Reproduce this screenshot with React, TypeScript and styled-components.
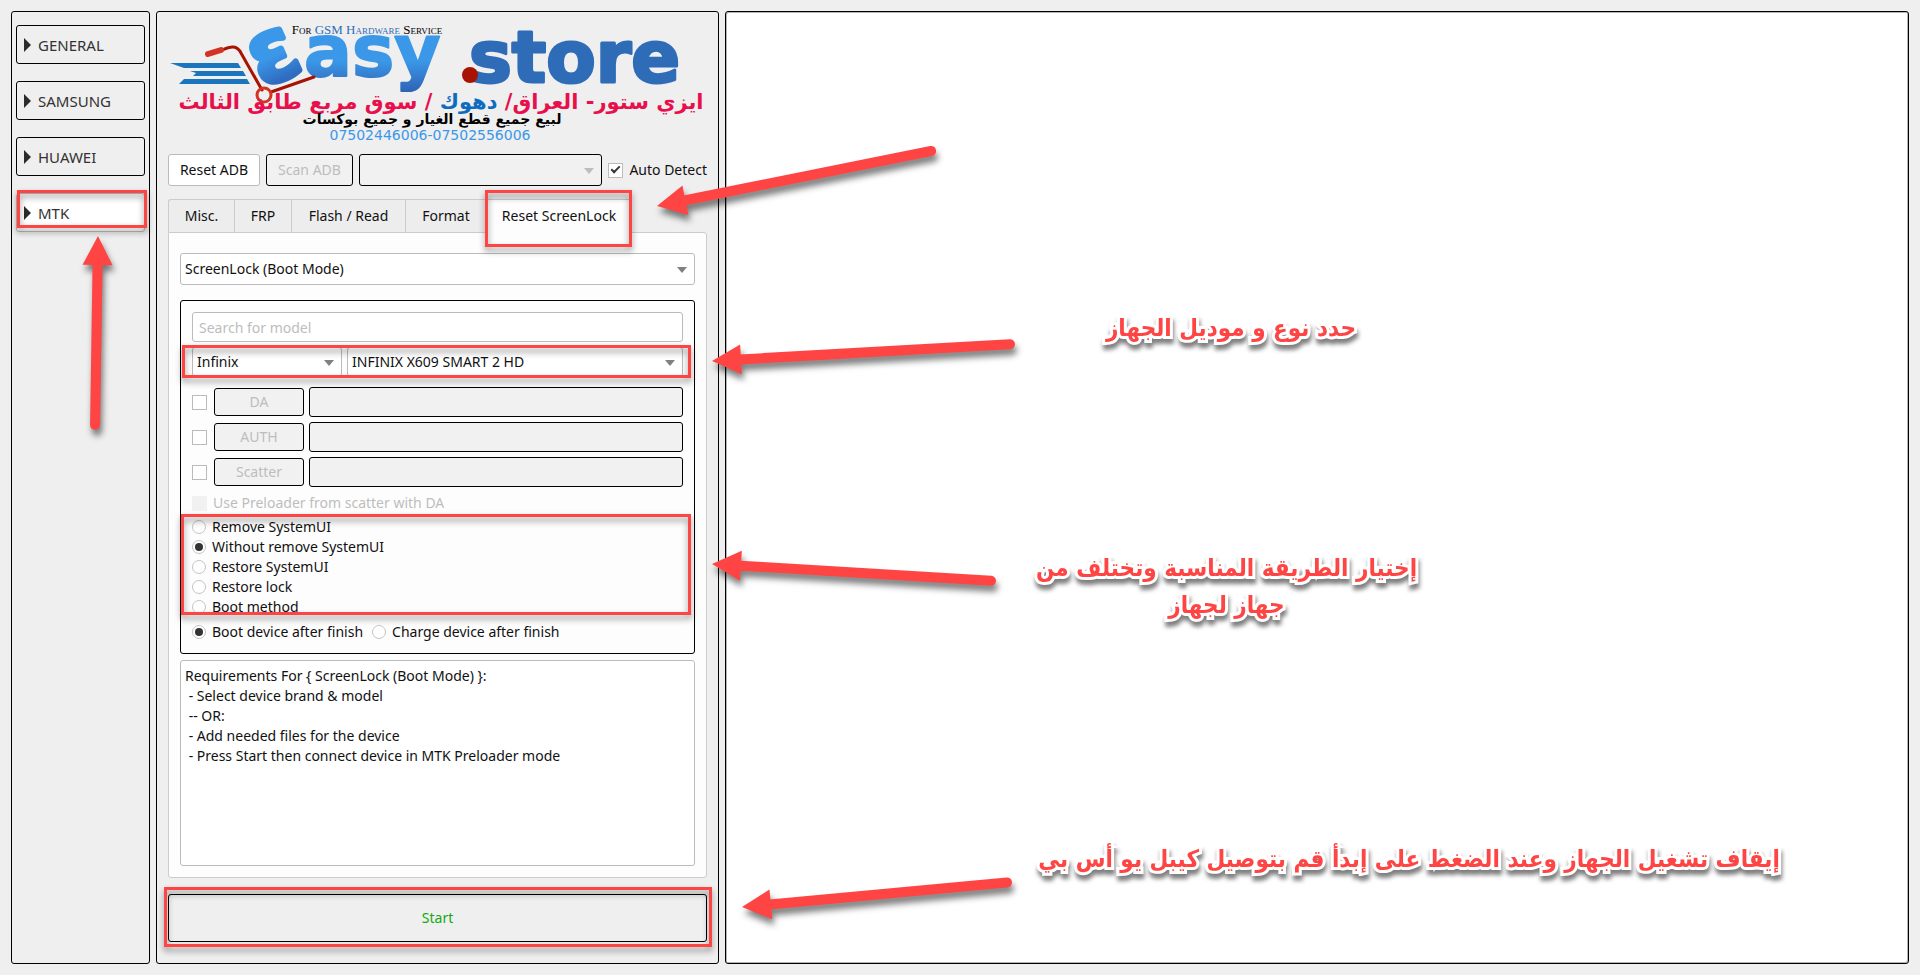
import React from "react";
import styled, { createGlobalStyle } from "styled-components";

const accent = "#ff4444";
const uiFont = '"Noto Sans", "Open Sans", sans-serif';
const arabicFont = '"DejaVu Sans Condensed", "DejaVu Sans", sans-serif';

const GlobalStyle = createGlobalStyle`
  *, *::before, *::after { box-sizing: border-box; }
  body { margin: 0; background: #efefef; color: #111; font: 14px/20px ${uiFont}; }
  button, input, select, textarea { font: inherit; color: inherit; margin: 0; }
`;

const Page = styled.div`
  position: relative;
  display: grid;
  grid-template-columns: 139px 563px minmax(0, 1fr);
  column-gap: 6px;
  min-height: 100vh;
  padding: 11px;
  overflow: hidden;
`;

const Panel = styled.section`
  display: flex;
  flex-direction: column;
  border: 1px solid #000;
  border-radius: 3px;
`;

const Sidebar = styled(Panel).attrs({ as: "nav" })`
  gap: 17px;
  padding: 13px 4px;
`;

const Workspace = styled(Panel).attrs({ as: "main" })`
  padding: 0 11px 21px;
`;

const LogPanel = styled(Panel)`
  position: relative;
  background: #fff;
  box-shadow: inset -1px -1px #b5b5b5, inset 1px 1px #b5b5b5;
`;

const NavButton = styled.button<{ $active?: boolean }>`
  position: relative;
  display: flex;
  align-items: center;
  gap: 7px;
  height: 39px;
  padding: 0 7px;
  border: 1px solid ${(p) => (p.$active ? "#bbb" : "#000")};
  border-radius: 3px;
  background: ${(p) => (p.$active ? "#fff" : "#efefef")};
  color: #333;
  font-size: 15px;
`;

const Highlight = styled.span<{ $inset: string }>`
  position: absolute;
  inset: ${(p) => p.$inset};
  border: 3px solid ${accent};
  filter: drop-shadow(0 4px 3px rgba(0, 0, 0, 0.45));
  pointer-events: none;
`;

const LogoArea = styled.header`
  height: 142px;
`;

const Logo = styled.svg`
  display: block;
  width: 539px;
  height: 142px;
  overflow: visible;
`;

const AdbRow = styled.div`
  display: flex;
  align-items: center;
  gap: 6px;
  height: 32px;
  margin-bottom: 13px;
`;

const Button = styled.button<{ $width: number }>`
  width: ${(p) => p.$width}px;
  height: 100%;
  padding: 0;
  border: 1px solid #bbb;
  border-radius: 3px;
  background: #fff;
  white-space: nowrap;
  &:disabled { border-color: #000; background: #f1f1f1; color: #bdbdbd; }
`;

const SelectWrap = styled.div<{ $width?: number }>`
  position: relative;
  display: flex;
  flex: ${(p) => (p.$width ? `0 0 ${p.$width}px` : "1 1 0")};
  min-width: 0;
  color: #808080;
  &:has(select:disabled) { color: #bdbdbd; }
`;

const Select = styled.select<{ $height?: number }>`
  appearance: none;
  width: 100%;
  height: ${(p) => p.$height ?? 32}px;
  padding: 0 24px 0 4px;
  border: 1px solid #bbb;
  border-radius: 3px;
  background: #fff;
  color: #111;
  &:disabled { border-color: #000; background: #f1f1f1; opacity: 1; }
`;

const Caret = styled.svg`
  position: absolute;
  top: calc(50% - 2px);
  right: 8px;
  width: 10px;
  height: 6px;
  fill: currentColor;
  pointer-events: none;
`;

const Choice = styled.label<{ $muted?: boolean }>`
  display: flex;
  align-items: center;
  gap: 6px;
  height: 20px;
  white-space: nowrap;
  color: ${(p) => (p.$muted ? "#bdbdbd" : "inherit")};
`;

const Check = styled.input.attrs({ type: "checkbox" })`
  appearance: none;
  flex: none;
  display: grid;
  place-items: center;
  width: 15px;
  height: 15px;
  border: 1px solid #bbb;
  background: #fff;
  &:checked::before {
    content: "";
    width: 9px;
    height: 5px;
    margin-bottom: 3px;
    border: solid #333;
    border-width: 0 0 2px 2px;
    transform: rotate(-45deg);
  }
  &:disabled { border-color: #f1f1f1; background: #f1f1f1; }
`;

const Radio = styled.input.attrs({ type: "radio" })`
  appearance: none;
  flex: none;
  display: grid;
  place-items: center;
  width: 14px;
  height: 14px;
  border: 1px solid #c4c4c4;
  border-radius: 50%;
  background: #fff;
  &:checked::before {
    content: "";
    width: 8px;
    height: 8px;
    border-radius: 50%;
    background: #333;
  }
`;

const TabList = styled.div`
  display: flex;
  height: 33px;
`;

const Tab = styled.button<{ $width: number }>`
  position: relative;
  width: ${(p) => p.$width}px;
  padding: 0;
  border: 1px solid #ccc;
  border-width: 1px 0 0 1px;
  background: #ededed;
  white-space: nowrap;
  &:first-child { border-top-left-radius: 3px; }
  &[aria-selected="true"] {
    z-index: 1;
    margin-bottom: -1px;
    padding-bottom: 1px;
    border-right-width: 1px;
    background: #fdfdfd;
  }
`;

const TabPane = styled.div`
  display: flex;
  flex: 1;
  flex-direction: column;
  margin-bottom: 16px;
  padding: 20px 11px 11px;
  border: 1px solid #ccc;
  border-radius: 0 3px 3px 3px;
  background: #fdfdfd;
`;

const Line = styled.div<{ $gap?: number }>`
  position: relative;
  display: flex;
  align-items: center;
  gap: ${(p) => p.$gap ?? 5}px;
`;

const ModelLine = styled(Line)`
  margin-top: 5px;
`;

const Group = styled.div`
  display: flex;
  flex-direction: column;
  margin: 15px 0 6px;
  padding: 11px;
  border: 1px solid #000;
  border-radius: 3px;
`;

const TextField = styled.input`
  flex: 1;
  min-width: 0;
  height: 30px;
  padding: 0 6px;
  border: 1px solid #bbb;
  border-radius: 3px;
  background: #fff;
  &::placeholder { color: #bdbdbd; }
  &:disabled { border-color: #000; background: #f1f1f1; }
`;

const FileRows = styled.div`
  display: grid;
  gap: 5px;
  margin: 10px 0 6px;
`;

const FileRow = styled.div`
  display: flex;
  align-items: center;
  gap: 5px;
  ${Check} { margin-right: 2px; }
  ${Button} { height: 28px; }
`;

const Methods = styled.div`
  position: relative;
  margin: 4px 0 9px;
`;

const MethodList = styled.div`
  height: 96px;
  overflow: hidden;
`;

const Notes = styled.textarea`
  flex: 1;
  min-height: 110px;
  padding: 5px 4px;
  border: 1px solid #bbb;
  border-radius: 3px;
  background: #fff;
  resize: none;
  outline: none;
`;

const StartBox = styled.div`
  position: relative;
  display: flex;
`;

const StartButton = styled.button`
  flex: 1;
  height: 48px;
  border: 1px solid #000;
  border-radius: 3px;
  background: #efefef;
  color: #12a812;
`;

const ArrowLayer = styled.svg`
  position: absolute;
  top: 0;
  left: 0;
  width: 1100px;
  height: 960px;
  fill: ${accent};
  stroke: ${accent};
  filter: drop-shadow(2px 6px 3px rgba(0, 0, 0, 0.5));
  pointer-events: none;
`;

const Callout = styled.p<{ $x: number; $y: number; $width: number }>`
  position: absolute;
  left: ${(p) => p.$x}px;
  top: ${(p) => p.$y}px;
  width: ${(p) => p.$width}px;
  margin: 0;
  color: ${accent};
  font: bold 24px/37px ${arabicFont};
  text-align: center;
  white-space: pre;
  -webkit-text-stroke: 6px #fff;
  paint-order: stroke fill;
  filter: drop-shadow(1px 5px 2px rgba(0, 0, 0, 0.5));
`;

function Dropdown(props: { label: string; options: string[]; width?: number; height?: number; disabled?: boolean }) {
  return (
    <SelectWrap $width={props.width}>
      <Select aria-label={props.label} $height={props.height} disabled={props.disabled}>
        {props.options.map((o) => <option key={o}>{o}</option>)}
      </Select>
      <Caret viewBox="0 0 10 6"><path d="M0 0H10L5 6Z" /></Caret>
    </SelectWrap>
  );
}

function Arrow({ tip, tail }: { tip: [number, number]; tail: [number, number] }) {
  const dx = tail[0] - tip[0];
  const dy = tail[1] - tip[1];
  const length = Math.hypot(dx, dy);
  const angle = (Math.atan2(dy, dx) * 180) / Math.PI;
  return (
    <g transform={`translate(${tip[0]} ${tip[1]}) rotate(${angle})`}>
      <path d="M0 0L29 -15V15Z" stroke="none" />
      <path d={`M28 0H${length - 5}`} strokeWidth="10" strokeLinecap="round" />
    </g>
  );
}

function StoreLogo() {
  return (
    <Logo viewBox="168 12 539 142" role="img" aria-label="Easy .store">
      <defs>
        <linearGradient id="sky" gradientUnits="userSpaceOnUse" x1="0" y1="30" x2="0" y2="92">
          <stop offset="0.5" stopColor="#3b97e8" />
          <stop offset="1" stopColor="#2f62b4" />
        </linearGradient>
        <linearGradient id="skyTilt" gradientUnits="userSpaceOnUse" x1="0" y1="-50" x2="0" y2="0">
          <stop offset="0.5" stopColor="#3b97e8" />
          <stop offset="1" stopColor="#2f6cc0" />
        </linearGradient>
      </defs>
      <g fill="#1b75bc">
        <path d="M170 63H238L241 68H184Z" />
        <path d="M190 71H243L246 76H193L196 73Z" />
        <path d="M184 79H247L250 84H179Z" />
      </g>
      <g fontFamily='"DejaVu Sans", sans-serif' fontWeight="700" strokeWidth="2" strokeLinejoin="round">
        <text transform="translate(263 88) rotate(-24)" fontSize="66" fill="url(#skyTilt)" stroke="url(#skyTilt)" strokeWidth="6">Ɛ</text>
        <text x="304" y="76" fontSize="71" fill="url(#sky)" stroke="url(#sky)">asy</text>
        <text x="469" y="82" fontSize="72" fill="#2f6cb8" stroke="#2f6cb8" strokeWidth="3">store</text>
        <circle cx="470" cy="75" r="8" fill="#a81200" />
      </g>
      <g fill="none" strokeLinecap="round">
        <path d="M222 50C231 46 237 45 241 53L262 90M271 92L314 77" stroke="#a81200" strokeWidth="3" />
        <path d="M208 54L221 50" stroke="#d13424" strokeWidth="6" />
        <circle cx="264" cy="95" r="7" stroke="#d13424" strokeWidth="3" />
      </g>
      <text x="367" y="34" textAnchor="middle" fontFamily='"Liberation Serif", serif' fontSize="13" fontVariant="small-caps">
        For <tspan fill="#2f6cb8">GSM Hardware</tspan> Service
      </text>
      <g fontFamily='"DejaVu Sans", sans-serif' fontWeight="700" textAnchor="middle" direction="rtl">
        <text x="441" y="109" fontSize="21" fill="#e8104c">
          ايزي ستور- العراق/ <tspan fill="#0e6cc0">دهوك</tspan> / سوق مربع طابق الثالث
        </text>
        <text x="432" y="124" fontSize="14">لبيع جميع قطع الغيار و جميع بوكسات</text>
      </g>
      <text x="430" y="140" textAnchor="middle" fontFamily='"DejaVu Sans", sans-serif' fontSize="14" fill="#3b97e8">07502446006-07502556006</text>
    </Logo>
  );
}

const brands = ["GENERAL", "SAMSUNG", "HUAWEI", "MTK"];
const tabs: [string, number][] = [["Misc.", 66], ["FRP", 57], ["Flash / Read", 114], ["Format", 81], ["Reset ScreenLock", 146]];
const methods = ["Remove SystemUI", "Without remove SystemUI", "Restore SystemUI", "Restore lock", "Boot method"];
const notes = `Requirements For { ScreenLock (Boot Mode) }:
 - Select device brand & model
 -- OR:
 - Add needed files for the device
 - Press Start then connect device in MTK Preloader mode`;

export default function App() {
  return (
    <Page>
      <GlobalStyle />
      <Sidebar aria-label="Brands">
        {brands.map((name) => (
          <NavButton key={name} $active={name === "MTK"}>
            <svg width="7" height="14" viewBox="0 0 7 14"><path d="M0 0L7 7L0 14Z" fill="#2b2b2b" /></svg>
            {name}
            {name === "MTK" && <Highlight $inset="-4px -3px 3px 0" />}
          </NavButton>
        ))}
      </Sidebar>

      <Workspace>
        <LogoArea><StoreLogo /></LogoArea>
        <AdbRow>
          <Button $width={92}>Reset ADB</Button>
          <Button $width={87} disabled>Scan ADB</Button>
          <Dropdown label="ADB device" options={[""]} disabled />
          <Choice><Check defaultChecked />Auto Detect</Choice>
        </AdbRow>

        <TabList role="tablist">
          {tabs.map(([name, width]) => (
            <Tab key={name} role="tab" $width={width} aria-selected={name === "Reset ScreenLock"}>
              {name}
              {name === "Reset ScreenLock" && <Highlight $inset="-10px -1px -14px -2px" />}
            </Tab>
          ))}
        </TabList>
        <TabPane role="tabpanel">
          <Line><Dropdown label="Operation" options={["ScreenLock (Boot Mode)"]} /></Line>
          <Group>
            <Line><TextField aria-label="Search for model" placeholder="Search for model" /></Line>
            <ModelLine>
              <Dropdown label="Brand" options={["Infinix"]} width={150} height={30} />
              <Dropdown label="Model" options={["INFINIX X609 SMART 2 HD"]} height={30} />
              <Highlight $inset="-2px -8px -1px -10px" />
            </ModelLine>
            <FileRows>
              {["DA", "AUTH", "Scatter"].map((name) => (
                <FileRow key={name}>
                  <Check aria-label={`Use ${name}`} />
                  <Button $width={90} disabled>{name}</Button>
                  <TextField aria-label={`${name} file`} disabled />
                </FileRow>
              ))}
            </FileRows>
            <Choice $muted><Check disabled />Use Preloader from scatter with DA</Choice>
            <Methods>
              <MethodList role="radiogroup" aria-label="Method">
                {methods.map((name) => (
                  <Choice key={name}><Radio name="method" defaultChecked={name === "Without remove SystemUI"} />{name}</Choice>
                ))}
              </MethodList>
              <Highlight $inset="-3px -8px -2px -11px" />
            </Methods>
            <Line $gap={9}>
              <Choice><Radio name="finish" defaultChecked />Boot device after finish</Choice>
              <Choice><Radio name="finish" />Charge device after finish</Choice>
            </Line>
          </Group>
          <Notes aria-label="Requirements" readOnly value={notes} />
        </TabPane>
        <StartBox>
          <StartButton>Start</StartButton>
          <Highlight $inset="-7px -5px -5px -4px" />
        </StartBox>
      </Workspace>

      <LogPanel aria-label="Log">
        <Callout dir="rtl" $x={350} $y={298} $width={310}>حدد نوع و موديل الجهاز</Callout>
        <Callout dir="rtl" $x={298} $y={538} $width={405}>{"إختيار الطريقة المناسبة وتختلف من\nجهاز لجهاز"}</Callout>
        <Callout dir="rtl" $x={298} $y={829} $width={770}>إيقاف تشغيل الجهاز وعند الضغط على إبدأ قم بتوصيل كيبل يو أس بي</Callout>
      </LogPanel>

      <ArrowLayer viewBox="0 0 1100 960" aria-hidden="true">
        <Arrow tip={[98, 236]} tail={[95, 430]} />
        <Arrow tip={[657, 206]} tail={[936, 150]} />
        <Arrow tip={[712, 361]} tail={[1015, 344]} />
        <Arrow tip={[712, 564]} tail={[996, 581]} />
        <Arrow tip={[742, 907]} tail={[1012, 882]} />
      </ArrowLayer>
    </Page>
  );
}
